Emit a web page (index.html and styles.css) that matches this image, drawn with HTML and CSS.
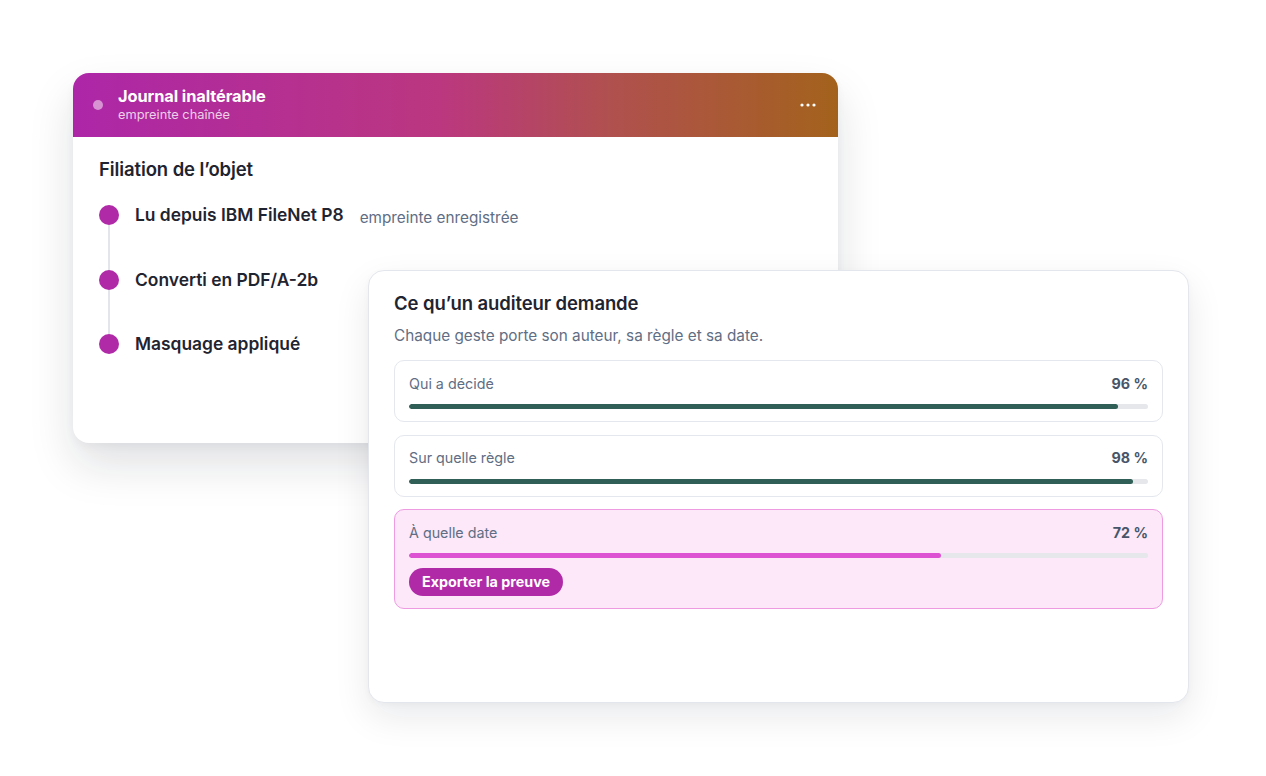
FILE: index.html
```html
<!DOCTYPE html>
<html lang="fr">
<head>
<meta charset="utf-8">
<title>Journal inaltérable</title>
<link rel="stylesheet" href="styles.css">
</head>
<body>
<div class="canvas">
  <section class="card journal">
    <header class="journal-head">
      <span class="head-dot"></span>
      <div class="head-text">
        <div class="head-title">Journal inaltérable</div>
        <div class="head-sub">empreinte chaînée</div>
      </div>
      <svg class="more" width="16" height="4" viewBox="0 0 16 4"><circle cx="2" cy="2" r="1.6" fill="#fff"/><circle cx="8" cy="2" r="1.6" fill="#fff"/><circle cx="14" cy="2" r="1.6" fill="#fff"/></svg>
    </header>
    <div class="journal-body">
      <h2 class="section-title">Filiation de l’objet</h2>
      <ul class="timeline">
        <li class="step"><span class="step-dot"></span><span class="step-label">Lu depuis IBM FileNet P8</span><span class="step-note">empreinte enregistrée</span></li>
        <li class="step"><span class="step-dot"></span><span class="step-label">Converti en PDF/A-2b</span></li>
        <li class="step last"><span class="step-dot"></span><span class="step-label">Masquage appliqué</span></li>
      </ul>
    </div>
  </section>

  <section class="card audit">
    <h2 class="section-title">Ce qu’un auditeur demande</h2>
    <p class="audit-sub">Chaque geste porte son auteur, sa règle et sa date.</p>
    <div class="metrics">
      <div class="metric">
        <div class="metric-row"><span class="metric-label">Qui a décidé</span><span class="metric-value">96&nbsp;%</span></div>
        <div class="track"><div class="fill" style="width:96%"></div></div>
      </div>
      <div class="metric">
        <div class="metric-row"><span class="metric-label">Sur quelle règle</span><span class="metric-value">98&nbsp;%</span></div>
        <div class="track"><div class="fill" style="width:98%"></div></div>
      </div>
      <div class="metric highlight">
        <div class="metric-row"><span class="metric-label">À quelle date</span><span class="metric-value">72&nbsp;%</span></div>
        <div class="track"><div class="fill" style="width:72%"></div></div>
        <button class="export">Exporter la preuve</button>
      </div>
    </div>
  </section>
</div>
</body>
</html>
```

FILE: styles.css
```css
* { box-sizing: border-box; }
html, body { margin: 0; padding: 0; background: #ffffff; }
body {
  font-family: Inter, "Noto Sans", "Liberation Sans", sans-serif;
  color: #1f2430;
  width: 1266px;
  height: 776px;
  overflow: hidden;
}
.canvas { position: relative; width: 1266px; height: 776px; }

.card {
  position: absolute;
  background: #fff;
  border-radius: 16px;
}

.journal {
  left: 73px;
  top: 73px;
  width: 765px;
  height: 370px;
  box-shadow: 0 22px 45px rgba(15, 23, 42, 0.13), 0 4px 10px rgba(15, 23, 42, 0.04);
  overflow: hidden;
}
.journal-head {
  height: 64px;
  display: flex;
  align-items: center;
  padding: 0 22px 0 20px;
  background: linear-gradient(90deg, #ad26a8 0%, #bb377f 48%, #b0504f 70%, #a3621c 100%);
  color: #fff;
}
.head-dot {
  width: 10px; height: 10px; border-radius: 50%;
  background: rgba(255, 255, 255, 0.5);
  flex: none;
}
.head-text { margin-left: 15px; flex: 1; padding-bottom: 2px; }
.head-title { font-size: 16.4px; font-weight: 700; line-height: 20px; letter-spacing: -0.1px; }
.head-sub { font-size: 12.8px; line-height: 16px; margin-top: 1px; color: rgba(255, 255, 255, 0.78); }
.more { flex: none; margin-top: 0; }

.journal-body { padding: 20px 26px; }
.section-title {
  margin: 0;
  font-size: 18.5px;
  font-weight: 600;
  line-height: 24px;
  color: #1f2430;
  letter-spacing: -0.1px;
}
.timeline { list-style: none; margin: 24px 0 0; padding: 0; }
.step {
  position: relative;
  display: flex;
  height: 64.5px;
  align-items: flex-start;
}
.step-dot {
  width: 20px; height: 20px; border-radius: 50%;
  background: #b02aa8;
  flex: none;
}
.step::after {
  content: "";
  position: absolute;
  left: 9px;
  top: 20px;
  width: 2px;
  height: 44.5px;
  background: #e2e6ec;
}
.step.last::after { display: none; }
.step-label {
  margin-left: 16px;
  font-size: 17.4px;
  font-weight: 600;
  line-height: 20px;
  color: #1f2430;
}
.step-note {
  margin-left: 16px;
  font-size: 15.3px;
  line-height: 20px;
  padding-top: 3px;
  color: #5f6e84;
}

.audit {
  left: 368px;
  top: 270px;
  width: 821px;
  height: 433px;
  border: 1px solid #e3e6ec;
  padding: 20px 25px;
  box-shadow: 0 14px 36px rgba(15, 23, 42, 0.09), 0 2px 6px rgba(15, 23, 42, 0.03);
}
.audit-sub {
  margin: 10px 0 0;
  font-size: 15.3px;
  line-height: 22px;
  color: #5f6e84;
}
.metrics {
  margin-top: 13px;
  display: flex;
  flex-direction: column;
  gap: 12.5px;
}
.metric {
  border: 1px solid #e4e7ed;
  border-radius: 10px;
  padding: 12px 14px 12px;
  background: #fff;
}
.metric-row {
  display: flex;
  justify-content: space-between;
  align-items: center;
  height: 20px;
}
.metric-label { font-size: 14.3px; color: #5f6e84; }
.metric-value { font-size: 14.3px; font-weight: 700; color: #475569; }
.track {
  margin-top: 11px;
  height: 5px;
  border-radius: 3px;
  background: #e5e7eb;
  overflow: hidden;
}
.fill { height: 100%; border-radius: 3px; background: #2f5f56; }

.metric.highlight {
  background: #fce8f8;
  border-color: #ee9be2;
  padding-bottom: 12px;
}
.metric.highlight .fill { background: #dd52d3; }
.export {
  display: block;
  margin-top: 10px;
  height: 28px;
  padding: 0 13px;
  border: none;
  border-radius: 14px;
  background: #b02aa8;
  color: #fff;
  font-family: Inter, "Noto Sans", "Liberation Sans", sans-serif;
  font-size: 14.3px;
  font-weight: 700;
  line-height: 28px;
}
```
